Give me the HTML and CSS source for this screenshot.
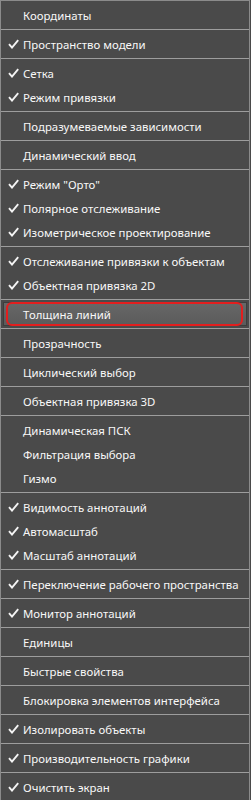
FILE: index.html
```html
<!DOCTYPE html>
<html lang="ru">
<head>
  <meta charset="UTF-8">
  <title>Строка состояния</title>
  <link rel="stylesheet" href="styles.css">
</head>
<body>
<div class="menu">
  <ul class="group">
    <li class="item"><span class="check"></span>Координаты</li>
  </ul>
  <ul class="group">
    <li class="item on"><span class="check"></span>Пространство модели</li>
  </ul>
  <ul class="group">
    <li class="item on"><span class="check"></span>Сетка</li>
    <li class="item on"><span class="check"></span>Режим привязки</li>
  </ul>
  <ul class="group">
    <li class="item"><span class="check"></span>Подразумеваемые зависимости</li>
  </ul>
  <ul class="group">
    <li class="item"><span class="check"></span>Динамический ввод</li>
  </ul>
  <ul class="group">
    <li class="item on"><span class="check"></span>Режим "Орто"</li>
    <li class="item on"><span class="check"></span>Полярное отслеживание</li>
    <li class="item on"><span class="check"></span>Изометрическое проектирование</li>
  </ul>
  <ul class="group">
    <li class="item on"><span class="check"></span>Отслеживание привязки к объектам</li>
    <li class="item on"><span class="check"></span>Объектная привязка 2D</li>
  </ul>
  <ul class="group">
    <li class="item hover"><span class="check"></span>Толщина линий</li>
  </ul>
  <ul class="group">
    <li class="item"><span class="check"></span>Прозрачность</li>
  </ul>
  <ul class="group">
    <li class="item"><span class="check"></span>Циклический выбор</li>
  </ul>
  <ul class="group">
    <li class="item"><span class="check"></span>Объектная привязка 3D</li>
  </ul>
  <ul class="group">
    <li class="item"><span class="check"></span>Динамическая ПСК</li>
    <li class="item"><span class="check"></span>Фильтрация выбора</li>
    <li class="item"><span class="check"></span>Гизмо</li>
  </ul>
  <ul class="group">
    <li class="item on"><span class="check"></span>Видимость аннотаций</li>
    <li class="item on"><span class="check"></span>Автомасштаб</li>
    <li class="item on"><span class="check"></span>Масштаб аннотаций</li>
  </ul>
  <ul class="group">
    <li class="item on"><span class="check"></span>Переключение рабочего пространства</li>
  </ul>
  <ul class="group">
    <li class="item on"><span class="check"></span>Монитор аннотаций</li>
  </ul>
  <ul class="group">
    <li class="item"><span class="check"></span>Единицы</li>
  </ul>
  <ul class="group">
    <li class="item"><span class="check"></span>Быстрые свойства</li>
  </ul>
  <ul class="group">
    <li class="item"><span class="check"></span>Блокировка элементов интерфейса</li>
  </ul>
  <ul class="group">
    <li class="item on"><span class="check"></span>Изолировать объекты</li>
  </ul>
  <ul class="group">
    <li class="item on"><span class="check"></span>Производительность графики</li>
  </ul>
  <ul class="group">
    <li class="item on"><span class="check"></span>Очистить экран</li>
  </ul>
</div>

<script>
  // галочки рисуем одним svg, чтобы не повторять разметку
  const checkSvg = '<svg width="11" height="10" viewBox="0 0 11 10"><path d="M1 5.2 L4 8.6 L10.2 1.2" fill="none" stroke="#f4f4f4" stroke-width="1.9"/></svg>';

  document.querySelectorAll('.item.on .check').forEach(el => {
    el.innerHTML = checkSvg;
  });
</script>
</body>
</html>
```

FILE: styles.css
```css
* {
  margin: 0;
  padding: 0;
  box-sizing: border-box;
}

html, body {
  height: 100%;
}

body {
  background-color: #4a4a4a;
  font-family: "Noto Sans", "Open Sans", sans-serif;
  font-size: 11.4px;
  color: #f8f8f8;
}

.menu {
  width: 250px;
  border: 1px solid #8b8b8b;
  border-bottom: none;
  background-color: #4a4a4a;
}

.group {
  list-style: none;
  padding: 2px 0;
  border-bottom: 1px solid #9d9d9d;
}

.item {
  position: relative;
  display: flex;
  align-items: center;
  height: 24px;
  white-space: nowrap;
}

.check {
  display: flex;
  align-items: center;
  width: 22px;
  padding-left: 7px;
  flex-shrink: 0;
}

.item.hover {
  margin: 0 2px;
  border: 1px solid #3d3d3d;
  background: linear-gradient(#676767, #5b5b5b);
}

.item.hover .check {
  width: 19px;
}

/* красная рамка-выноска поверх пункта */
.item.hover::after {
  content: "";
  position: absolute;
  top: -1px;
  bottom: -1px;
  left: 2px;
  right: 3px;
  border: 2px solid #e31e1e;
  border-radius: 6px;
}
```
